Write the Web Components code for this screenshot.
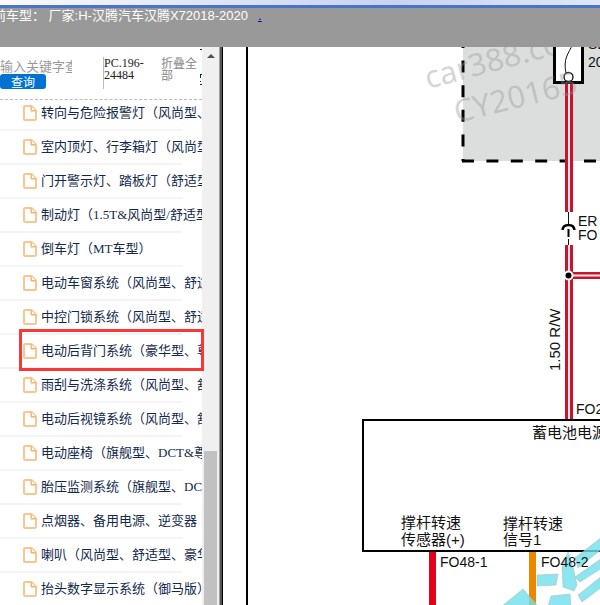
<!DOCTYPE html>
<html lang="zh-CN">
<head>
<meta charset="utf-8">
<title>电路图</title>
<style>
  html, body {
    height: 100%;
    margin: 0;
  }

  body {
    background: #fff;
    overflow: hidden;
  }
</style>
</head>
<body>
<manual-page>
  <page-header slot="header" model="H-汉腾汽车汉腾X72018-2020"></page-header>
  <search-bar slot="sidebar" code="PC.196-24484"></search-bar>
  <nav-list slot="sidebar">
    <nav-item>转向与危险报警灯（风尚型、舒适型）</nav-item>
    <nav-item>室内顶灯、行李箱灯（风尚型）</nav-item>
    <nav-item>门开警示灯、踏板灯（舒适型）</nav-item>
    <nav-item>制动灯（1.5T&amp;风尚型/舒适型）</nav-item>
    <nav-item>倒车灯（MT车型）</nav-item>
    <nav-item>电动车窗系统（风尚型、舒适型）</nav-item>
    <nav-item>中控门锁系统（风尚型、舒适型）</nav-item>
    <nav-item marked>电动后背门系统（豪华型、尊贵型）</nav-item>
    <nav-item>雨刮与洗涤系统（风尚型、舒适型）</nav-item>
    <nav-item>电动后视镜系统（风尚型、舒适型）</nav-item>
    <nav-item>电动座椅（旗舰型、DCT&amp;尊贵型）</nav-item>
    <nav-item>胎压监测系统（旗舰型、DCT）</nav-item>
    <nav-item>点烟器、备用电源、逆变器</nav-item>
    <nav-item>喇叭（风尚型、舒适型、豪华型）</nav-item>
    <nav-item>抬头数字显示系统（御马版）</nav-item>
  </nav-list>
  <scroll-track slot="track"></scroll-track>
  <wiring-diagram slot="content"></wiring-diagram>
</manual-page>

<script>
class ManualPage extends HTMLElement {
  constructor () {
    super()
    this.shadow = this.attachShadow({ mode: 'open' })
  }

  connectedCallback () {
    this.render()
  }

  render () {
    this.shadow.innerHTML =
      /* html */`
        <style>
          :host {
            display: flex;
            flex-direction: column;
            height: 100vh;
            font-family: 'Liberation Serif', 'Noto Sans CJK SC', serif;
            font-size: 13px;
          }

          main {
            display: flex;
            flex: 1;
            min-height: 0;
          }

          aside {
            width: 202px;
            flex: none;
          }

          .content {
            flex: 1;
            min-width: 0;
            overflow: hidden;
          }
        </style>

        <slot name="header"></slot>
        <main>
          <aside><slot name="sidebar"></slot></aside>
          <slot name="track"></slot>
          <div class="content"><slot name="content"></slot></div>
        </main>
      `
  }
}

class PageHeader extends HTMLElement {
  constructor () {
    super()
    this.shadow = this.attachShadow({ mode: 'open' })
  }

  connectedCallback () {
    this.render()
  }

  render () {
    this.shadow.innerHTML =
      /* html */`
        <style>
          :host {
            display: block;
            flex: none;
            height: 47px;
            overflow: hidden;
            background: #999;
            color: #fff;
            font: 13px/16px 'Liberation Sans', 'Noto Sans CJK SC', sans-serif;
          }

          .strip {
            height: 5px;
            background: linear-gradient(90deg, #fafafe, #c9d3f0 65%, #e0e6f8);
            border-bottom: 3px solid #4a74c9;
          }

          p {
            margin: 0 0 0 -7px;
            white-space: nowrap;
          }

          a {
            margin-left: 10px;
            color: #0000c8;
          }
        </style>

        <div class="strip"></div>
        <p>前车型： 厂家:${this.getAttribute('model')}<a href="#">.</a></p>
      `
  }
}

class SearchBar extends HTMLElement {
  constructor () {
    super()
    this.shadow = this.attachShadow({ mode: 'open' })
  }

  connectedCallback () {
    this.render()
  }

  render () {
    this.shadow.innerHTML =
      /* html */`
        <style>
          :host {
            display: flex;
            align-items: flex-start;
            box-sizing: border-box;
            height: 53px;
            padding-top: 10px;
            overflow: hidden;
            border-bottom: 1px dashed #bbb;
            font-size: 12px;
            line-height: 12px;
          }

          form {
            width: 103px;
            margin: 0;
          }

          input {
            display: block;
            width: 72px;
            height: 17px;
            padding: 0;
            border: 0;
            outline: 0;
            background: none;
            font: 13px 'Noto Sans CJK SC', sans-serif;
          }

          input::placeholder {
            color: #999;
          }

          button {
            display: block;
            width: 46px;
            height: 15px;
            padding: 0;
            border: 0;
            border-radius: 3px;
            background: #0073d0;
            color: #fff;
            font: 12px/15px 'Noto Sans CJK SC', sans-serif;
          }

          .code {
            box-sizing: border-box;
            width: 58px;
            height: 32px;
            border-left: 1px solid #bbb;
            word-break: break-word;
            color: #222;
          }

          .fold {
            width: 39px;
            padding-top: 1px;
            color: #888;
            text-decoration: none;
          }

          .edge {
            flex: none;
            margin-top: -10px;
            stroke: #13294b;
          }
        </style>

        <form>
          <input type="text" aria-label="关键字" placeholder="输入关键字查询">
          <button type="button">查询</button>
        </form>
        <div class="code">${this.getAttribute('code')}</div>
        <a class="fold" href="#">折叠全部</a>
        <svg class="edge" width="2" height="40" aria-hidden="true">
          <path d="M0 2.5H2M0 27.5H2M0 34.5H1M0.5 27V31M0 37.5H2"/>
        </svg>
      `
  }
}

class NavList extends HTMLElement {
  constructor () {
    super()
    this.shadow = this.attachShadow({ mode: 'open' })
  }

  connectedCallback () {
    this.render()
  }

  render () {
    this.shadow.innerHTML =
      /* html */`
        <style>
          :host {
            display: block;
            margin-top: -3px;
          }
        </style>

        <nav><slot></slot></nav>
      `
  }
}

class NavItem extends HTMLElement {
  constructor () {
    super()
    this.shadow = this.attachShadow({ mode: 'open' })
  }

  connectedCallback () {
    this.render()
  }

  render () {
    this.shadow.innerHTML =
      /* html */`
        <style>
          :host {
            display: block;
            position: relative;
            height: 34px;
          }

          a {
            display: flex;
            align-items: center;
            gap: 4px;
            height: 32px;
            padding-left: 23px;
            overflow: hidden;
            color: #13294b;
            line-height: 16px;
            text-decoration: none;
            white-space: nowrap;
          }

          svg {
            flex: none;
            fill: #fff;
            stroke: #f9c690;
            stroke-width: 2;
            stroke-linejoin: round;
          }

          .fold {
            stroke: #f4b36d;
            stroke-width: 1.4;
          }

          .rule {
            width: 182px;
            height: 2px;
            background: #f4f4f4;
          }

          /* red frame, reaches a little over the scrollbar */
          :host([marked]) {
            z-index: 2;
          }

          :host([marked])::after {
            content: '';
            position: absolute;
            top: -6px;
            right: -2px;
            bottom: -2px;
            left: 19px;
            border: 3px solid #fa3737;
            pointer-events: none;
          }
        </style>

        <a href="#">
          <svg width="14" height="16" viewBox="0 0 14 16">
            <path d="M2 1H8.5L13 5.5V14Q13 15 12 15H2Q1 15 1 14V2Q1 1 2 1Z"/>
            <path class="fold" d="M8.2 1.2V5.8H12.8"/>
          </svg>
          <span><slot></slot></span>
        </a>
        <div class="rule"></div>
      `
  }
}

class ScrollTrack extends HTMLElement {
  constructor () {
    super()
    this.shadow = this.attachShadow({ mode: 'open' })
  }

  connectedCallback () {
    this.render()
  }

  render () {
    this.shadow.innerHTML =
      /* html */`
        <style>
          :host {
            display: flex;
            flex: none;
            flex-direction: column;
            justify-content: space-between;
            align-items: center;
            box-sizing: border-box;
            width: 21px;
            padding-right: 4px;
            background: linear-gradient(90deg, #f0f0f0 17px, #a0a0a0 17px 18px, #555 18px 20px, #000 20px);
          }

          .up {
            margin-top: 7px;
            border: 4px solid transparent;
            border-top: 0;
            border-bottom-color: #505050;
          }

          .thumb {
            width: 13px;
            height: 27.6%;
            background: #c1c1c1;
          }
        </style>

        <div class="up"></div>
        <div class="thumb"></div>
      `
  }
}

class WiringDiagram extends HTMLElement {
  constructor () {
    super()
    this.shadow = this.attachShadow({ mode: 'open' })
  }

  connectedCallback () {
    this.render()
  }

  render () {
    this.shadow.innerHTML =
      /* html */`
        <style>
          :host {
            display: block;
            height: 100%;
          }

          svg {
            display: block;
            width: 100%;
            height: 100%;
          }

          text {
            font: 14px 'Liberation Sans', 'Noto Sans CJK SC', sans-serif;
            fill: #111;
          }

          .label {
            font-size: 15px;
          }

          .watermark {
            font: 31px 'Noto Sans', sans-serif;
            fill: #999;
            fill-opacity: 0.42;
          }

          .logo {
            fill: #6fe0ec;
            fill-opacity: 0.8;
            stroke: #b4bcbc;
            stroke-opacity: 0.6;
          }
        </style>

        <svg>
          <g transform="translate(-223 -47)">
            <!-- sheet edge -->
            <path d="M247 0V2000" stroke="#000" stroke-width="2"/>

            <!-- fuse box -->
            <path d="M463 0H2000V161H463Z" fill="#dcdedd"/>
            <path d="M463 36V161" stroke="#000" stroke-width="3" stroke-dasharray="12 12.6"/>
            <path d="M462 161H2000" stroke="#000" stroke-width="3" stroke-dasharray="12 12.4"/>
            <text class="watermark" transform="translate(428 89) rotate(-15)">car388.com</text>
            <path d="M554.5 20V82.5H582.5V20Z" fill="#fff" stroke="#000" stroke-width="3"/>
            <path d="M573 44C568 54 563 59 566 73" fill="none" stroke="#111"/>
            <circle cx="568.5" cy="77" r="4.5" fill="#fff" stroke="#111" stroke-width="1.3"/>
            <text x="588" y="49">SB</text>
            <text x="588" y="67">20A</text>

            <!-- supply wire, red with white tracer -->
            <path d="M569 84V212M569 245V419" stroke="#c8142c" stroke-width="8"/>
            <path d="M570 275.5H2000" stroke="#c8142c" stroke-width="7"/>
            <path d="M569 84V212M569 245V419M570 275.5H2000" stroke="#fbe6ea" stroke-width="2"/>
            <path d="M568.5 212V225M568.5 239V245" stroke="#111"/>
            <path d="M568.5 229V237" stroke="#000" stroke-width="2"/>
            <path d="M562.5 230Q563 225 568.5 225Q574 225 574.5 230" fill="none" stroke="#000" stroke-width="2.5"/>
            <circle cx="568.5" cy="275.5" r="5" fill="#fff"/>
            <circle cx="568.5" cy="275.5" r="3" fill="#000"/>
            <text class="watermark" transform="translate(457 123) rotate(-14)">CY20165</text>
            <text x="578" y="226">ER</text>
            <text x="578" y="240">FO</text>
            <text class="label" transform="translate(560 371) rotate(-90)">1.50 R/W</text>
            <text x="576" y="414">FO2</text>

            <!-- control unit -->
            <path d="M2000 420H363V551H2000" fill="none" stroke="#000" stroke-width="2"/>
            <text class="label" x="532" y="438">蓄电池电源</text>
            <text class="label" x="401" y="528">撑杆转速</text>
            <text class="label" x="401" y="545">传感器(+)</text>
            <text class="label" x="503" y="529">撑杆转速</text>
            <text class="label" x="503" y="545">信号1</text>
            <path d="M432.5 552V2000" stroke="#e4001b" stroke-width="7"/>
            <path d="M532.5 552V2000" stroke="#ee8700" stroke-width="7"/>

            <!-- logo -->
            <g class="logo">
              <path d="M502 606L523 589L538 606Z"/>
              <path d="M537 575L558 574L556 585L537 586Z"/>
              <path d="M568 552L562 567L563 587L574 591L577 585L573 567Z"/>
              <path d="M575 558L602 537V549L578 568Z"/>
              <path d="M575 577L602 558V568L580 582Z"/>
              <path d="M578 595L602 576V587L582 602Z"/>
              <path d="M551 596L570 594L571 606H548Z"/>
            </g>
            <text x="440" y="567">FO48-1</text>
            <text x="541" y="567">FO48-2</text>
          </g>
        </svg>
      `
  }
}

customElements.define('manual-page', ManualPage)
customElements.define('page-header', PageHeader)
customElements.define('search-bar', SearchBar)
customElements.define('nav-list', NavList)
customElements.define('nav-item', NavItem)
customElements.define('scroll-track', ScrollTrack)
customElements.define('wiring-diagram', WiringDiagram)
</script>
</body>
</html>
